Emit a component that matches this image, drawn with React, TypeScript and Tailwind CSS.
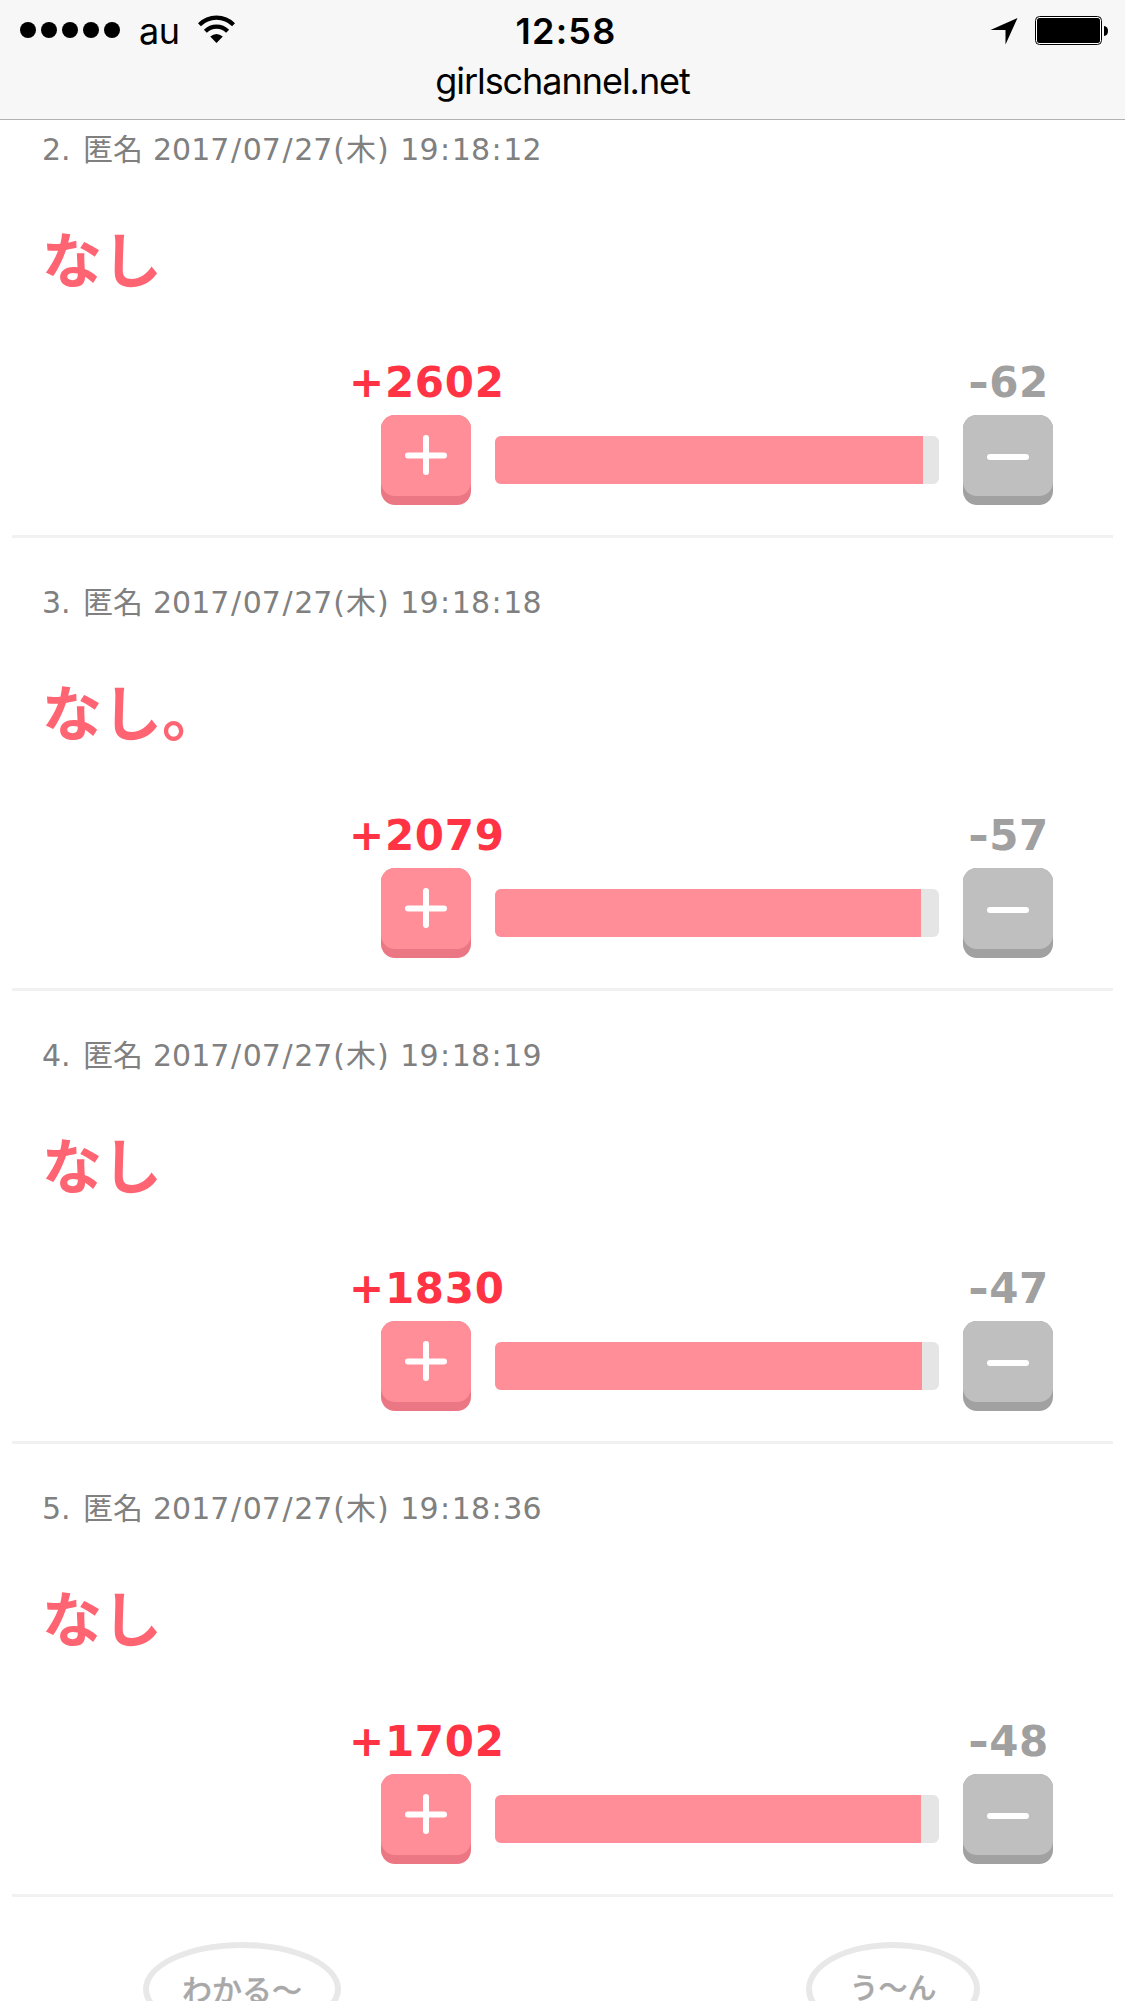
import clsx from 'clsx'

type Comment = {
  id: number
  date: string
  weekday: string
  time: string
  body: string
  plus: number
  minus: number
}

const comments: Comment[] = [
  { id: 2, date: '2017/07/27', weekday: '木', time: '19:18:12', body: 'なし', plus: 2602, minus: 62 },
  { id: 3, date: '2017/07/27', weekday: '木', time: '19:18:18', body: 'なし。', plus: 2079, minus: 57 },
  { id: 4, date: '2017/07/27', weekday: '木', time: '19:18:19', body: 'なし', plus: 1830, minus: 47 },
  { id: 5, date: '2017/07/27', weekday: '木', time: '19:18:36', body: 'なし', plus: 1702, minus: 48 },
]

const BAR_WIDTH = 438

function StatusBar() {
  return (
    <header className="relative z-10 h-[120px] border-b border-[#b2b2b2] bg-[#f7f7f7] font-['Inter','Liberation_Sans',sans-serif] text-black">
      <div className="flex h-[60px] items-start justify-between">
        <div className="flex w-[400px] pl-5">
          <div className="flex gap-[5px] pt-[22px]">
            {[0, 1, 2, 3, 4].map((i) => (
              <span key={i} className="size-4 rounded-full bg-black" />
            ))}
          </div>
          <span className="ml-[19px] w-[59px] pt-[11px] text-[36px] leading-[40px] tracking-[-0.5px]">au</span>
          <svg className="mt-[15px] h-[29px] w-[37px]" viewBox="0 0 37 29" fill="none" stroke="#000">
            <path d="M1.4 9.7A24 24 0 0 1 35.6 9.7" strokeWidth="4.2" />
            <path d="M7.4 16.2A15.6 15.6 0 0 1 29.6 16.2" strokeWidth="4.2" />
            <path d="M18.5 28L12.2 21.6Q18.5 16.4 24.8 21.6Z" fill="#000" stroke="none" />
          </svg>
        </div>
        <span className="pl-[7px] pt-[11px] text-[36px] font-semibold leading-[40px] tracking-[1.2px]">12:58</span>
        <div className="flex w-[400px] justify-end pr-[16px]">
          <svg className="mr-[17px] mt-[17px] h-7 w-7" viewBox="0 0 28 28">
            <path d="M27.5 1L0.5 13H15.5V27.5Z" />
          </svg>
          <svg className="mt-4 h-[29px] w-[74px]" viewBox="0 0 74 29">
            <rect x="0.5" y="0.5" width="66" height="28" rx="4" fill="#fff" stroke="#000" />
            <rect x="2" y="2" width="63" height="25" rx="2.5" />
            <path d="M69 10Q73 10.5 73 15T69 20Z" />
          </svg>
        </div>
      </div>
      <p className="text-center text-[36px] leading-[42px] tracking-[-1.05px]">girlschannel.net</p>
    </header>
  )
}

// separators are set a bit wider than the digits around them
function Spaced({ text }: { text: string }) {
  return (
    <>
      {text.split(/([/:])/).map((part, i) => (
        <span key={i} className={clsx((part === '/' || part === ':') && 'mx-[1.6px]')}>
          {part}
        </span>
      ))}
    </>
  )
}

function VoteButton({ type }: { type: 'plus' | 'minus' }) {
  const plus = type === 'plus'
  return (
    <button
      type="button"
      aria-label={type}
      className={clsx('flex size-[90px] shrink-0 items-start rounded-[14px]', plus ? 'bg-[#ea7783]' : 'bg-[#a1a1a1]')}
    >
      <span className={clsx('block h-[81px] rounded-[14px]', plus ? 'bg-[#ff8e99]' : 'bg-[#bfbfbf]')}>
        <svg className="h-[81px] w-[90px]" viewBox="0 0 90 81" stroke="#fff" strokeWidth="6" strokeLinecap="round">
          {plus ? <path d="M27 40.5H63M45 23V57" /> : <path d="M27 42H63" />}
        </svg>
      </span>
    </button>
  )
}

function CommentItem({ comment }: { comment: Comment }) {
  const ratio = comment.plus / (comment.plus + comment.minus)
  return (
    <li className="h-[453px] border-b-[3px] border-[#f1f1f1] pl-[30px] pr-[60px] pt-[45px]">
      <p className="flex h-10 items-center text-[30px] leading-[40px] text-[#808080]">
        <span className="w-[41px]">{comment.id}.</span>
        <span className="w-[70px]">匿名</span>
        <span>
          <Spaced text={comment.date} />
        </span>
        <span className="ml-[1px] w-[67px]">
          (<span className="mx-[1px]">{comment.weekday}</span>)
        </span>
        <span>
          <Spaced text={comment.time} />
        </span>
      </p>
      <p className="mt-[47px] h-[90px] text-[60px] font-bold leading-[90px] text-[#ff6473]">{comment.body}</p>

      {/* Votes */}
      <div className="mt-[51px] flex justify-between text-[42px] font-bold leading-[50px]">
        <span className="ml-[307px] tracking-[0.7px] text-[#ff3344]">+{comment.plus}</span>
        <span className="mr-[4px] text-[#a0a0a0]">
          <span className="inline-block origin-left scale-x-[1.2] pr-[4px]">-</span>
          <span className="tracking-[0.7px]">{comment.minus}</span>
        </span>
      </div>
      <div className="mt-[7px] flex items-center justify-end gap-6">
        <VoteButton type="plus" />
        <div className="h-12 w-[444px] overflow-hidden rounded-[6px] bg-[#e5e5e5]">
          <div className="h-full bg-[#ff8e99]" style={{ width: Math.round(ratio * BAR_WIDTH) }} />
        </div>
        <VoteButton type="minus" />
      </div>
    </li>
  )
}

export default function App() {
  return (
    <div className="h-[2001px] w-[1125px] overflow-hidden bg-white font-['DejaVu_Sans','Noto_Sans_CJK_JP',sans-serif]">
      <StatusBar />

      {/* the first comment is scrolled partly under the bar */}
      <ul className="-mt-[35px] px-3">
        {comments.map((comment) => (
          <CommentItem key={comment.id} comment={comment} />
        ))}
      </ul>

      <div className="flex justify-between pl-[143px] pr-[145px] pt-[45px] font-['Noto_Sans_CJK_JP',sans-serif] font-medium text-[#a8a8a8] [-webkit-text-stroke:0.3px_#a8a8a8]">
        <div className="h-[94px] w-[198px] rounded-[50%] border-[6px] border-[#e8e8e8] pt-[18px] text-center text-[30px] leading-[44px]">
          わかる〜
        </div>
        <div className="h-[94px] w-[174px] rounded-[50%] border-[6px] border-[#e8e8e8] pt-[16px] text-center text-[29px] leading-[44px]">
          う〜ん
        </div>
      </div>
    </div>
  )
}
